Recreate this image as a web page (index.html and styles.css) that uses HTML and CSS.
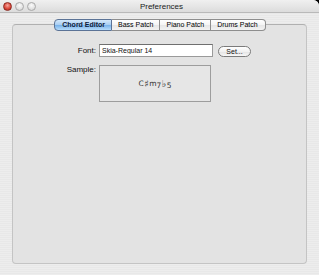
FILE: index.html
```html
<!DOCTYPE html>
<html lang="en">
<head>
    <meta charset="UTF-8">
    <meta name="viewport" content="width=device-width, initial-scale=1.0">
    <title>Preferences</title>
    <link rel="stylesheet" href="styles.css">
</head>
<body>
    <div class="window">
        <div class="titlebar">
            <div class="lights">
                <span class="light close"></span>
                <span class="light"></span>
                <span class="light"></span>
            </div>
            <div class="title">Preferences</div>
        </div>

        <div class="content">
            <div class="group">
                <div class="tabs">
                    <span class="tab selected">Chord Editor</span>
                    <span class="tab">Bass Patch</span>
                    <span class="tab">Piano Patch</span>
                    <span class="tab">Drums Patch</span>
                </div>

                <div class="form">
                    <label class="label" for="fontField">Font:</label>
                    <div class="field-row">
                        <input type="text" id="fontField" class="field" value="Skia-Regular 14">
                        <button class="set-btn">Set...</button>
                    </div>

                    <span class="label sample-label">Sample:</span>
                    <div class="sample">C<span class="acc">♯</span>m<span class="fig">7</span><span class="acc">♭</span><span class="fig">5</span></div>
                </div>
            </div>
        </div>
    </div>
</body>
</html>
```

FILE: styles.css
```css
html {
    background: #000;
}

body {
    margin: 0;
    font-family: 'Liberation Sans', Arial, sans-serif;
    color: #111;
}

.window {
    width: 319px;
    height: 275px;
    border-radius: 0 6px 0 0;
    overflow: hidden;
    display: flex;
    flex-direction: column;
    background: repeating-linear-gradient(180deg, #ededed 0, #ededed 1px, #e8e8e8 1px, #e8e8e8 2px);
}

/* title bar */
.titlebar {
    height: 12px;
    display: flex;
    align-items: center;
    background: linear-gradient(180deg, #f0f0f0 0%, #dcdcdc 100%);
    border-bottom: 1px solid #b9b9b9;
}

.lights {
    display: flex;
    gap: 3px;
    padding-left: 3px;
}

.light {
    width: 7px;
    height: 7px;
    border-radius: 50%;
    border: 1px solid #a9a9a9;
    background: radial-gradient(circle at 50% 35%, #fafafa 0%, #dedede 70%, #cfcfcf 100%);
}

.light.close {
    border-color: #8c2a22;
    background: radial-gradient(circle at 50% 35%, #f4a89e 0%, #dc4a3d 55%, #a5231a 100%);
}

.title {
    flex: 1;
    text-align: center;
    font-size: 8px;
    color: #1a1a1a;
    margin-right: 35px;
    padding-left: 3px;
}

/* content */
.content {
    flex: 1;
    padding: 11px 12px 11px 12px;
    display: flex;
}

.group {
    flex: 1;
    border: 1px solid #c4c4c4;
    border-top-color: #b0b0b0;
    border-radius: 4px;
    background: #e3e3e3;
}

.tabs {
    display: flex;
    justify-content: center;
    margin-top: -6px;
    margin-left: 1px;
}

.tab {
    height: 10px;
    line-height: 10px;
    padding: 0 6px;
    font-size: 7px;
    color: #000;
    border: 1px solid #8e8e8e;
    border-left: none;
    background: linear-gradient(180deg, #ffffff 0%, #f4f4f4 50%, #e6e6e6 51%, #f3f3f3 100%);
}

.tab:first-child {
    border-left: 1px solid #6d7f99;
    border-radius: 4px 0 0 4px;
}

.tab:last-child {
    border-radius: 0 4px 4px 0;
    padding-right: 7px;
}

.tab.selected {
    font-weight: bold;
    color: #10203a;
    border-color: #5b7396;
    padding: 0 6px 0 7px;
    background: linear-gradient(180deg, #d3e8fb 0%, #a7cdf2 50%, #76b1ea 51%, #b7dcfb 100%);
}

/* form */
.form {
    display: grid;
    grid-template-columns: 83px auto;
    column-gap: 3px;
    row-gap: 8px;
    margin-top: 13px;
}

.label {
    font-size: 8px;
    text-align: right;
    line-height: 13px;
}

.field-row {
    display: flex;
    align-items: center;
    gap: 5px;
}

.field {
    width: 114px;
    height: 13px;
    box-sizing: border-box;
    margin: 0;
    padding: 0 2px;
    border: 1px solid #9a9a9a;
    border-top-color: #6f6f6f;
    background: #fff;
    font-family: 'Liberation Sans', Arial, sans-serif;
    font-size: 7px;
    color: #111;
    outline: none;
}

.set-btn {
    width: 33px;
    height: 11px;
    margin: 1px 0 0 0;
    padding: 0;
    border: 1px solid #7b7b7b;
    border-radius: 6px;
    background: linear-gradient(180deg, #ffffff 0%, #f1f1f1 50%, #e2e2e2 51%, #f8f8f8 100%);
    font-family: 'Liberation Sans', Arial, sans-serif;
    font-size: 7px;
    line-height: 9px;
    color: #111;
}

.sample-label {
    line-height: 10px;
}

.sample {
    width: 112px;
    height: 37px;
    box-sizing: border-box;
    border: 1px solid #9d9d9d;
    background: #e6e6e6;
    display: flex;
    align-items: center;
    justify-content: center;
    font-family: 'DejaVu Sans', sans-serif;
    font-size: 7.5px;
    color: #333;
}

.acc {
    font-size: 9.5px;
    margin: 0 0.5px;
}

.fig {
    position: relative;
    top: 1.5px;
}
```
